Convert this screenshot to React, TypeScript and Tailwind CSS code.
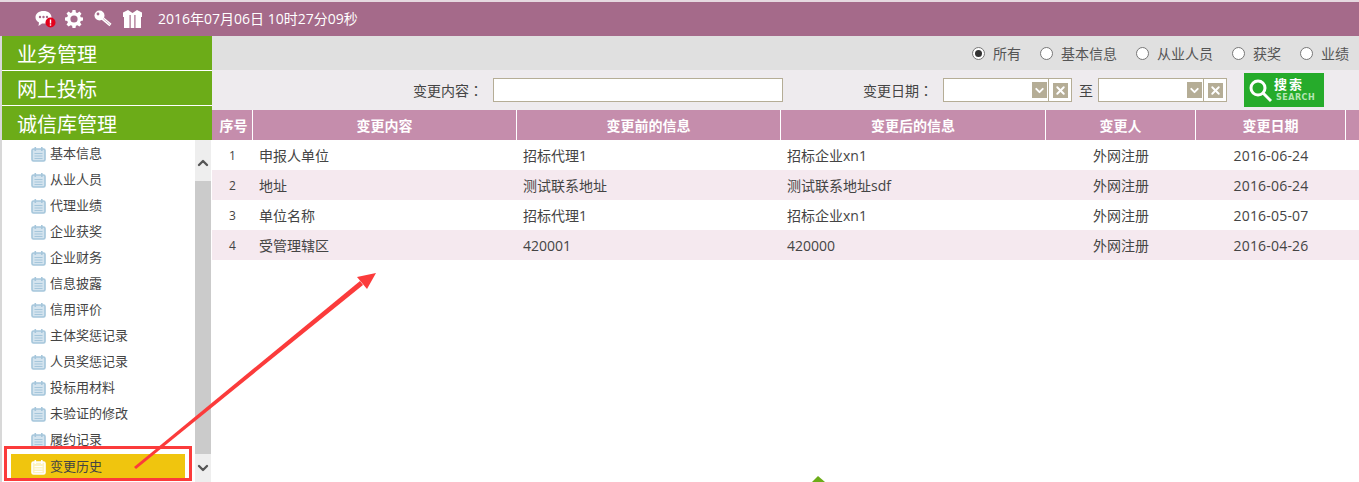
import React from 'react';
import { ChevronDown, ChevronUp, X } from 'lucide-react';

const menuItems = ['基本信息', '从业人员', '代理业绩', '企业获奖', '企业财务', '信息披露', '信用评价', '主体奖惩记录', '人员奖惩记录', '投标用材料', '未验证的修改', '履约记录'];

const rows = [
  ['1', '申报人单位', '招标代理1', '招标企业xn1', '外网注册', '2016-06-24'],
  ['2', '地址', '测试联系地址', '测试联系地址sdf', '外网注册', '2016-06-24'],
  ['3', '单位名称', '招标代理1', '招标企业xn1', '外网注册', '2016-05-07'],
  ['4', '受管理辖区', '420001', '420000', '外网注册', '2016-04-26'],
];

const radios = ['所有', '基本信息', '从业人员', '获奖', '业绩'];

const NoteIcon = ({ light = false }: { light?: boolean }) => {
  const edge = light ? '#fff' : '#a5c6db';
  const fill = light ? '#fdf3c0' : '#d3e3ee';
  return (
    <svg width="15" height="15" viewBox="0 0 15 15" className="shrink-0">
      <rect x="1" y="2" width="13" height="12" rx="1.500" fill={fill} stroke={edge} strokeWidth="1.600" />
      <rect x="3.500" y="0" width="1.600" height="4" fill={edge} />
      <rect x="10" y="0" width="1.600" height="4" fill={edge} />
      <path d="M3.500 6.500h8M3.500 9h8M3.500 11.500h8" stroke={edge} strokeWidth="1" />
    </svg>
  );
};

const DateBox = () => (
  <div className="flex h-[24px] w-[129px] items-center border border-[#b5ad96] bg-white">
    <div className="flex-1" />
    <div className="mr-[1px] flex h-[16px] w-[15px] items-center justify-center bg-[#b5ad96] text-white">
      <ChevronDown size={13} strokeWidth={3.5} />
    </div>
    <div className="flex h-full w-[23px] items-center justify-center border-l border-[#b5ad96]">
      <div className="flex h-[15px] w-[15px] items-center justify-center bg-[#b5ad96] text-white">
        <X size={13} strokeWidth={3.5} />
      </div>
    </div>
  </div>
);

export default function App() {
  return (
    <div className="relative h-[482px] w-[1359px] overflow-hidden bg-white text-[14px] text-[#444] [font-family:'Open_Sans','Noto_Sans_CJK_SC',sans-serif]">
      {/* top bar */}
      <div className="flex h-[36px] items-center border-t-2 border-[#e6d8e0] bg-[#a56a8a] pl-[35px] text-white">
        <svg width="21" height="18" viewBox="0 0 21 18" className="mr-[9px]">
          <path d="M8.500 1c4.700 0 8 2.700 8 6.200s-3.300 6.300-8 6.300l-1.500-.1L3.500 16l.5-3.500C1.800 11.400.5 9.500.5 7.200.5 3.700 3.800 1 8.500 1z" fill="#fff" />
          <circle cx="5" cy="7" r="1.200" fill="#a56a8a" />
          <circle cx="8.500" cy="7" r="1.200" fill="#a56a8a" />
          <circle cx="12" cy="7" r="1.200" fill="#a56a8a" />
          <circle cx="15.500" cy="12.500" r="5" fill="#e3001b" />
          <rect x="14.800" y="9.500" width="1.400" height="4" fill="#fff" />
          <rect x="14.800" y="14.300" width="1.400" height="1.400" fill="#fff" />
        </svg>
        <svg width="18" height="18" viewBox="0 0 18 18" className="mr-[11px]">
          <path d="M7.500 0h3l.4 2.400 1.500.6 2-1.400 2.100 2.100-1.400 2 .6 1.500 2.300.4v3l-2.300.4-.6 1.500 1.400 2-2.100 2.100-2-1.400-1.500.6-.4 2.200h-3l-.4-2.200-1.500-.6-2 1.400-2.100-2.100 1.400-2-.6-1.500L0 10.500v-3l2.300-.4.600-1.500-1.400-2 2.100-2.100 2 1.400 1.500-.6z" fill="#fff" />
          <circle cx="9" cy="9" r="3.600" fill="#a56a8a" />
        </svg>
        <svg width="18" height="18" viewBox="0 0 18 18" className="mr-[11px]">
          <circle cx="5.500" cy="5.500" r="5" fill="#fff" />
          <circle cx="4" cy="4" r="1.400" fill="#a56a8a" />
          <path d="M8 8L16.500 15" stroke="#fff" strokeWidth="3.200" />
          <path d="M9 8.500L16 14.500" stroke="#c9a3b8" strokeWidth="0.800" />
        </svg>
        <svg width="19" height="18" viewBox="0 0 19 18" className="mr-[16px]">
          <path d="M0 2.500L5 0l4.500 3L14 0l5 2.500V7h-1v11H1V7H0z" fill="#fff" />
          <rect x="6.500" y="5" width="1.200" height="13" fill="#a56a8a" />
          <rect x="11.300" y="5" width="1.200" height="13" fill="#a56a8a" />
        </svg>
        <span className="leading-none">2016年07月06日 10时27分09秒</span>
      </div>

      <div className="flex h-[446px]">
        {/* sidebar */}
        <div className="flex w-[212px] shrink-0 flex-col border-l-2 border-[#d8d8d8]">
          <div className="flex h-[34px] items-center bg-[#6cac18] pl-[15px] pt-[3px] text-[20px] leading-none text-white">业务管理</div>
          <div className="mt-[1px] flex h-[34px] items-center bg-[#6cac18] pl-[15px] pt-[3px] text-[20px] leading-none text-white">网上投标</div>
          <div className="mt-[1px] flex h-[34px] items-center bg-[#6cac18] pl-[15px] pt-[3px] text-[20px] leading-none text-white">诚信库管理</div>
          <div className="flex min-h-0 flex-1 text-[13px]">
            <div className="flex-1 pt-[1px]">
              {menuItems.map((item) => (
                <div key={item} className="flex h-[26px] items-center gap-[4px] pl-[29px]">
                  <NoteIcon />
                  <span>{item}</span>
                </div>
              ))}
              <div className="ml-[9px] mt-[1px] flex h-[26px] w-[174px] items-center gap-[4px] bg-[#f0c50e] pl-[20px]">
                <NoteIcon light />
                <span>变更历史</span>
              </div>
            </div>
            <div className="mr-[1px] flex w-[16px] shrink-0 flex-col bg-[#eeeeee]">
              <div className="flex h-[41px] items-center justify-center pt-[4px] text-[#555]">
                <ChevronUp size={20} strokeWidth={3.5} />
              </div>
              <div className="h-[273px] bg-[#cbcbcb]" />
              <div className="flex flex-1 items-center justify-center text-[#555]">
                <ChevronDown size={20} strokeWidth={3.5} />
              </div>
            </div>
          </div>
        </div>

        {/* main */}
        <div className="min-w-0 flex-1">
          <div className="flex h-[34px] items-center justify-end gap-[19px] bg-[#e0e0e0] pr-[10px]">
            {radios.map((label) => (
              <div key={label} className="flex items-center gap-[8px]">
                <span className="flex h-[13px] w-[13px] items-center justify-center rounded-full border border-[#777] bg-white">
                  {label === '所有' && <span className="h-[7px] w-[7px] rounded-full bg-[#333]" />}
                </span>
                <span className="whitespace-nowrap pt-[1px] text-[#555]">{label}</span>
              </div>
            ))}
          </div>

          <div className="flex h-[40px] items-center bg-[#eeebee]">
            <span className="ml-[201px] w-[80px] whitespace-nowrap">变更内容<span className="[font-family:'Noto_Sans_CJK_TC',sans-serif]">：</span></span>
            <div className="h-[24px] w-[290px] border border-[#b5ad96] bg-white" />
            <span className="ml-[80px] w-[80px] whitespace-nowrap">变更日期<span className="[font-family:'Noto_Sans_CJK_TC',sans-serif]">：</span></span>
            <DateBox />
            <span className="ml-[7px] mr-[5px]">至</span>
            <DateBox />
            <div className="ml-[17px] flex h-[34px] w-[80px] items-center bg-[#26ab2b] pl-[5px] text-white">
              <svg width="25" height="25" viewBox="0 0 25 25" className="mt-[2px] shrink-0">
                <circle cx="9" cy="9" r="7" fill="none" stroke="#fff" strokeWidth="3" />
                <path d="M14 14L22 22" stroke="#fff" strokeWidth="3" />
              </svg>
              <div className="flex flex-col items-start">
                <span className="text-[13px] font-bold leading-[11px] tracking-[2px]">搜索</span>
                <span className="ml-[2px] mt-[4px] text-[8px] font-bold leading-[7px] tracking-[0.5px] text-[#b5e6b5] [font-family:'DejaVu_Sans',sans-serif]">SEARCH</span>
              </div>
            </div>
          </div>

          <div className="grid grid-cols-[41px_264px_264px_265px_150px_150px_13px]">
            {['序号', '变更内容', '变更前的信息', '变更后的信息', '变更人', '变更日期', ''].map((h, i) => (
              <div key={i} className={`flex h-[30px] items-center justify-center bg-[#c58dac] pt-[1px] font-bold text-white ${i < 6 ? 'border-r border-white' : ''} ${i === 0 ? 'pl-[3px]' : ''}`}>
                {h}
              </div>
            ))}
          </div>
          {rows.map((row, r) => (
            <div key={r} className={`grid h-[30px] grid-cols-[41px_264px_264px_265px_150px_150px_13px] items-center pt-[1px] ${r % 2 ? 'bg-[#f5e9ef]' : 'bg-white'}`}>
              <div className="text-center text-[12px]">{row[0]}</div>
              <div className="pl-[6px]">{row[1]}</div>
              <div className="pl-[6px]">{row[2]}</div>
              <div className="pl-[6px]">{row[3]}</div>
              <div className="text-center">{row[4]}</div>
              <div className="text-center tracking-[0.2px]">{row[5]}</div>
              <div />
            </div>
          ))}
        </div>
      </div>

      {/* annotation overlays */}
      <div className="absolute left-[4px] top-[446px] h-[35px] w-[188px] border-[3px] border-[#fb3b3b]" />
      <svg width="1359" height="482" className="pointer-events-none absolute left-0 top-0">
        <path d="M134 467L136 469L363 285L360 281z" fill="#fb3b3b" />
        <path d="M376 273L357 277L367 289z" fill="#fb3b3b" />
        <path d="M812 482L818 476L825 482z" fill="#6cac18" />
      </svg>
    </div>
  );
}
